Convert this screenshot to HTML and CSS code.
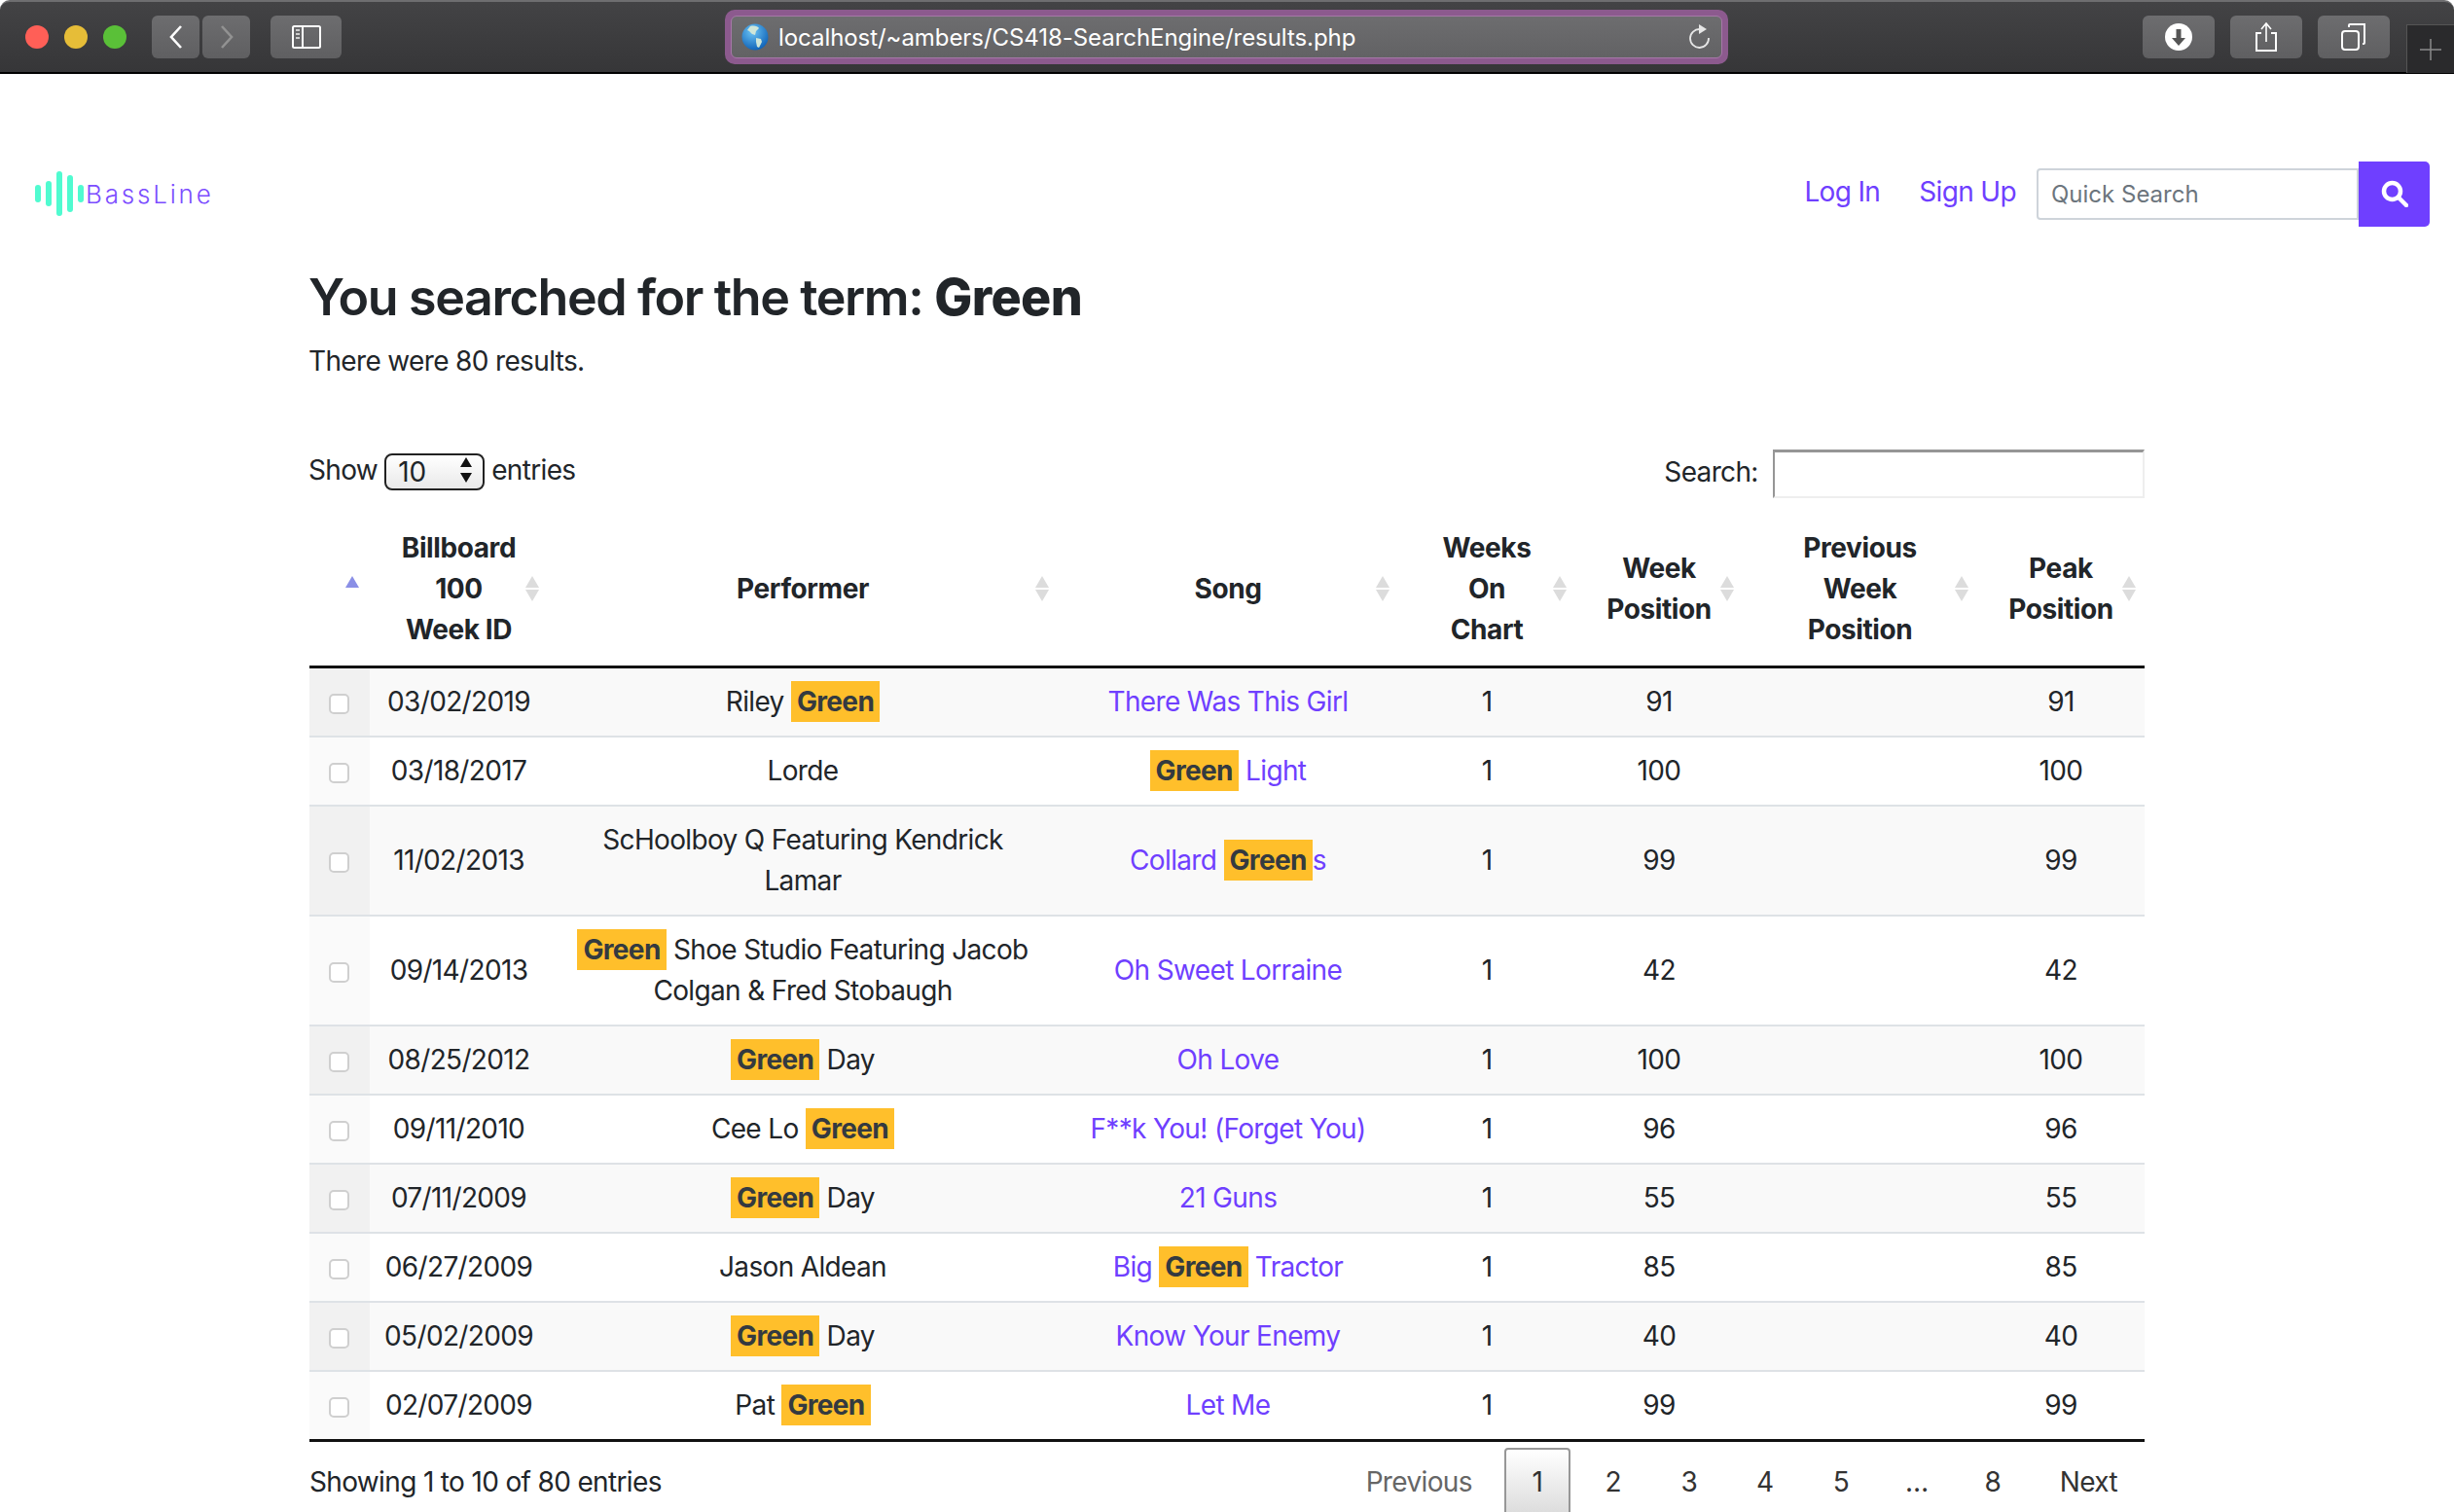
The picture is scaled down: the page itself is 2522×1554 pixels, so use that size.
FILE: index.html
```html
<!DOCTYPE html>
<html lang="en">
<head>
    <meta charset="UTF-8">
    <meta name="viewport" content="width=device-width, initial-scale=1.0">
    <title>BassLine - Results</title>
    <link rel="stylesheet" href="styles.css">
</head>
<body>
    <!-- browser toolbar -->
    <header class="toolbar">
        <div class="lights">
            <span class="light red"></span>
            <span class="light yellow"></span>
            <span class="light green"></span>
        </div>
        <div class="nav-btns">
            <span class="tool-btn small"><svg width="20" height="26" viewBox="0 0 20 26"><path d="M15 2 5 13l10 11" fill="none" stroke="#fff" stroke-width="2.6"/></svg></span>
            <span class="tool-btn small"><svg width="20" height="26" viewBox="0 0 20 26"><path d="M5 2l10 11L5 24" fill="none" stroke="#929292" stroke-width="2.6"/></svg></span>
        </div>
        <span class="tool-btn sidebar"><svg width="30" height="24" viewBox="0 0 30 24"><rect x="1" y="1" width="28" height="22" rx="1.5" fill="none" stroke="#fff" stroke-width="2"/><path d="M11 1v22" stroke="#fff" stroke-width="2"/><path d="M4 5h4M4 9h4M4 13h4" stroke="#ccc" stroke-width="2"/></svg></span>
        <div class="address-ring">
            <div class="address">
                <svg class="globe" width="28" height="28" viewBox="0 0 28 28">
                    <defs><radialGradient id="sea" cx="40%" cy="30%" r="75%"><stop offset="0" stop-color="#6cc4f5"/><stop offset="1" stop-color="#0c5fb5"/></radialGradient></defs>
                    <circle cx="14" cy="14" r="13.5" fill="url(#sea)"/>
                    <path d="M9 3c4-1 8 0 9 2l-3 3-1 4-3-1-3-3-2-1zM15 15l5 1 1 3-3 6-2-1-1-5z" fill="#cfe6d8"/>
                </svg>
                <span class="url">localhost/~ambers/CS418-SearchEngine/results.php</span>
                <svg class="reload" width="24" height="28" viewBox="0 0 24 28"><path d="M13 6a9.500 9.500 0 1 0 9 9" fill="none" stroke="#e6e6e6" stroke-width="1.800"/><path d="M12 1l8 5-8 5z" fill="#e6e6e6"/></svg>
            </div>
        </div>
        <div class="right-tools">
            <span class="tool-btn wide"><svg width="28" height="28" viewBox="0 0 28 28"><circle cx="14" cy="14" r="14" fill="#fff"/><path d="M11.500 6h5v9h4.500L14 23l-7-8h4.500z" fill="#555"/></svg></span>
            <span class="tool-btn wide"><svg width="24" height="30" viewBox="0 0 24 30"><path d="M7 11H2v18h20V11h-5" fill="none" stroke="#fff" stroke-width="2"/><path d="M12 20V2M7 7l5-6 5 6" fill="none" stroke="#fff" stroke-width="1.600"/></svg></span>
            <span class="tool-btn wide"><svg width="26" height="28" viewBox="0 0 26 28"><rect x="1" y="8" width="17" height="19" rx="3" fill="none" stroke="#fff" stroke-width="2"/><path d="M8 4V2a1 1 0 0 1 1-1h15v19a1 1 0 0 1-1 1h-1" fill="none" stroke="#fff" stroke-width="2"/></svg></span>
        </div>
        <span class="new-tab"><svg width="24" height="24" viewBox="0 0 24 24"><path d="M12 1v22M1 12h22" stroke="#8a8a8a" stroke-width="1.500"/></svg></span>
    </header>

    <nav class="navbar">
        <a class="brand" href="#">
            <svg width="50" height="46" viewBox="0 0 50 46">
                <g fill="#50fbd0">
                    <rect x="0" y="14" width="6" height="18" rx="3"/>
                    <rect x="11" y="10" width="6" height="26" rx="3"/>
                    <rect x="22" y="0" width="6" height="46" rx="3"/>
                    <rect x="33" y="4" width="6" height="38" rx="3"/>
                    <rect x="44" y="14" width="6" height="18" rx="3"/>
                </g>
            </svg>
            <span class="brand-name">BassLine</span>
        </a>
        <div class="nav-links">
            <a href="#">Log In</a>
            <a href="#">Sign Up</a>
        </div>
        <form class="quick-search">
            <input type="text" placeholder="Quick Search">
            <button type="button"><svg width="28" height="28" viewBox="0 0 28 28"><circle cx="11.500" cy="11.500" r="8.500" fill="none" stroke="#fff" stroke-width="4.500"/><path d="M18 18l8 8" stroke="#fff" stroke-width="4.500" stroke-linecap="round"/></svg></button>
        </form>
    </nav>

    <main class="container">
        <h2>You searched for the term: <b>Green</b></h2>
        <p class="count">There were 80 results.</p>

        <div class="table-top">
            <label class="length">Show
                <span class="select-wrap">
                    <select><option>10</option><option>25</option><option>50</option></select>
                    <svg width="14" height="26" viewBox="0 0 14 26"><path d="M7 0l6 10H1zM7 26l6-10H1z" fill="#111"/></svg>
                </span>
                entries</label>
            <label class="filter">Search: <input type="search"></label>
        </div>

        <table id="results">
            <colgroup>
                <col class="c-check"><col class="c-date"><col class="c-perf"><col class="c-song">
                <col class="c-weeks"><col class="c-pos"><col class="c-prev"><col class="c-peak">
            </colgroup>
            <thead>
                <tr>
                    <th class="sorted"></th>
                    <th class="sort">Billboard<br>100<br>Week ID</th>
                    <th class="sort">Performer</th>
                    <th class="sort">Song</th>
                    <th class="sort">Weeks<br>On<br>Chart</th>
                    <th class="sort">Week<br>Position</th>
                    <th class="sort">Previous<br>Week<br>Position</th>
                    <th class="sort">Peak<br>Position</th>
                </tr>
            </thead>
            <tbody>
                <tr class="odd"><td class="check"><input type="checkbox"></td><td>03/02/2019</td><td class="perf">Riley <mark>Green</mark></td><td><a href="#">There Was This Girl</a></td><td>1</td><td>91</td><td></td><td>91</td></tr>
                <tr><td class="check"><input type="checkbox"></td><td>03/18/2017</td><td class="perf">Lorde</td><td><a href="#"><mark>Green</mark> Light</a></td><td>1</td><td>100</td><td></td><td>100</td></tr>
                <tr class="odd"><td class="check"><input type="checkbox"></td><td>11/02/2013</td><td class="perf">ScHoolboy Q Featuring Kendrick Lamar</td><td><a href="#">Collard <mark>Green</mark>s</a></td><td>1</td><td>99</td><td></td><td>99</td></tr>
                <tr><td class="check"><input type="checkbox"></td><td>09/14/2013</td><td class="perf"><mark>Green</mark> Shoe Studio Featuring Jacob Colgan &amp; Fred Stobaugh</td><td><a href="#">Oh Sweet Lorraine</a></td><td>1</td><td>42</td><td></td><td>42</td></tr>
                <tr class="odd"><td class="check"><input type="checkbox"></td><td>08/25/2012</td><td class="perf"><mark>Green</mark> Day</td><td><a href="#">Oh Love</a></td><td>1</td><td>100</td><td></td><td>100</td></tr>
                <tr><td class="check"><input type="checkbox"></td><td>09/11/2010</td><td class="perf">Cee Lo <mark>Green</mark></td><td><a href="#">F**k You! (Forget You)</a></td><td>1</td><td>96</td><td></td><td>96</td></tr>
                <tr class="odd"><td class="check"><input type="checkbox"></td><td>07/11/2009</td><td class="perf"><mark>Green</mark> Day</td><td><a href="#">21 Guns</a></td><td>1</td><td>55</td><td></td><td>55</td></tr>
                <tr><td class="check"><input type="checkbox"></td><td>06/27/2009</td><td class="perf">Jason Aldean</td><td><a href="#">Big <mark>Green</mark> Tractor</a></td><td>1</td><td>85</td><td></td><td>85</td></tr>
                <tr class="odd"><td class="check"><input type="checkbox"></td><td>05/02/2009</td><td class="perf"><mark>Green</mark> Day</td><td><a href="#">Know Your Enemy</a></td><td>1</td><td>40</td><td></td><td>40</td></tr>
                <tr><td class="check"><input type="checkbox"></td><td>02/07/2009</td><td class="perf">Pat <mark>Green</mark></td><td><a href="#">Let Me</a></td><td>1</td><td>99</td><td></td><td>99</td></tr>
            </tbody>
        </table>

        <div class="table-bottom">
            <div class="info">Showing 1 to 10 of 80 entries</div>
            <div class="paging">
                <a class="page-btn disabled" href="#">Previous</a>
                <a class="page-btn current" href="#">1</a>
                <a class="page-btn" href="#">2</a>
                <a class="page-btn" href="#">3</a>
                <a class="page-btn" href="#">4</a>
                <a class="page-btn" href="#">5</a>
                <span class="page-btn dots">…</span>
                <a class="page-btn" href="#">8</a>
                <a class="page-btn next" href="#">Next</a>
            </div>
        </div>
    </main>
</body>
</html>
```

FILE: styles.css
```css
* {
    box-sizing: border-box;
}
html, body {
    height: 1554px;
    overflow: hidden;
}
body {
    margin: 0;
    background: #fff;
    color: #212529;
    font-family: Inter, "Liberation Sans", sans-serif;
    font-size: 28px;
    letter-spacing: -0.65px;
    line-height: 42px;
}
a {
    color: #6f3fff;
    text-decoration: none;
}

/* browser toolbar */
.toolbar {
    height: 76px;
    display: flex;
    align-items: flex-start;
    padding: 14px 0 0 26px;
    background: linear-gradient(#434345, #363638);
    border-top: 2px solid #6e6e70;
    border-bottom: 2px solid #000;
    border-radius: 10px 10px 0 0;
    position: relative;
    letter-spacing: 0;
}
.lights {
    display: flex;
    gap: 16px;
    margin-top: 10px;
    margin-right: 26px;
}
.light {
    width: 24px;
    height: 24px;
    border-radius: 50%;
}
.light.red { background: #ff5f57; }
.light.yellow { background: #e6bd38; }
.light.green { background: #5ac038; }
.tool-btn {
    height: 44px;
    display: flex;
    align-items: center;
    justify-content: center;
    background: linear-gradient(#6d6d6f, #5f5f61);
    border-radius: 6px;
}
.tool-btn.small { width: 49px; }
.tool-btn.sidebar { width: 73px; margin-left: 21px; }
.tool-btn.wide { width: 74px; }
.nav-btns {
    display: flex;
    gap: 3px;
}
.address-ring {
    width: 1031px;
    height: 56px;
    padding: 6px;
    background: #8c5a8e;
    border-radius: 10px;
    position: absolute;
    left: 745px;
    top: 8px;
}
.address {
    height: 44px;
    display: flex;
    align-items: center;
    gap: 10px;
    padding: 0 11px 0 10px;
    background: linear-gradient(#6d6d6f, #626264);
    border: 1px solid #a678a8;
    border-radius: 6px;
    color: #fff;
    font-size: 24px;
}
.url {
    flex: 1;
    padding-top: 2px;
    letter-spacing: -0.06px;
}
.right-tools {
    display: flex;
    gap: 16px;
    margin-left: auto;
    margin-right: 66px;
}
.new-tab {
    width: 49px;
    height: 50px;
    display: flex;
    align-items: center;
    justify-content: center;
    background: #2a2a2c;
    border: 1px solid #555;
    border-width: 1px 0 0 1px;
    position: absolute;
    right: 0;
    top: 23px;
}

/* site nav */
.navbar {
    height: 178px;
    display: flex;
    align-items: center;
    padding: 68px 25px 0 36px;
}
.brand {
    display: flex;
    align-items: center;
    margin-right: auto;
}
.brand-name {
    margin-left: 2px;
    padding-top: 2px;
    font-size: 26px;
    font-weight: 300;
    letter-spacing: 2.8px;
    color: #7c4dff;
}
.nav-links {
    display: flex;
    gap: 40px;
    margin-right: 21px;
    margin-top: -4px;
}
.quick-search {
    display: flex;
    align-items: center;
}
.quick-search input {
    width: 331px;
    height: 53px;
    padding: 0 13px;
    border: 2px solid #ced4da;
    border-radius: 4px 0 0 4px;
    color: #495057;
    font: 24px Inter, sans-serif;
}
.quick-search input::placeholder {
    color: #6c757d;
}
.quick-search button {
    width: 73px;
    height: 67px;
    padding: 0;
    border: none;
    border-radius: 0 5px 5px 0;
    background: #6f3fff;
    display: flex;
    align-items: center;
    justify-content: center;
}

/* results */
.container {
    width: 1886px;
    margin-left: 318px;
}
h2 {
    margin: 22px 0 0 -1px;
    font-size: 52px;
    line-height: 60px;
    font-weight: 600;
    letter-spacing: -1.4px;
}
h2 b {
    font-weight: 800;
    letter-spacing: -0.6px;
}
.count {
    margin: 14px 0 0 -1px;
}
.table-top {
    display: flex;
    justify-content: space-between;
    align-items: flex-start;
    margin: 70px 0 0 -1px;
}
.length {
    display: flex;
    align-items: center;
    gap: 7px;
    height: 42px;
}
.select-wrap {
    position: relative;
    display: block;
    height: 38px;
}
.select-wrap select {
    width: 103px;
    height: 38px;
    padding: 0 12px;
    appearance: none;
    border: 2px solid #222;
    border-radius: 8px;
    background: linear-gradient(#fff, #e9e9e9);
    color: #212529;
    font: 28px Inter, sans-serif;
}
.select-wrap svg {
    position: absolute;
    right: 12px;
    top: 6px;
}
.filter input {
    width: 382px;
    height: 50px;
    margin-left: 8px;
    padding: 0 8px;
    border: 2px solid #eee;
    border-top-width: 3px;
    border-top-color: #969696;
    border-left-color: #969696;
    vertical-align: middle;
}
table {
    width: 100%;
    table-layout: fixed;
    border-collapse: collapse;
    margin-top: 20px;
}
.c-check { width: 62px; }
.c-date { width: 183px; }
.c-perf { width: 524px; }
.c-song { width: 350px; }
.c-weeks { width: 182px; }
.c-pos { width: 172px; }
.c-prev { width: 241px; }
.c-peak { width: 172px; }
th, td {
    text-align: center;
    vertical-align: middle;
}
th {
    padding: 10px 0 16px;
    font-weight: 700;
    letter-spacing: -0.4px;
    position: relative;
    border-bottom: 3px solid #111;
}
th.sort::before, th.sort::after, th.sorted::before {
    content: "";
    position: absolute;
    right: 9px;
    border-left: 7px solid transparent;
    border-right: 7px solid transparent;
}
th.sort::before {
    top: calc(50% - 16px);
    border-bottom: 12px solid #dcdcdc;
}
th.sort::after {
    top: calc(50% - 2px);
    border-top: 12px solid #dcdcdc;
}
th.sorted::before {
    top: calc(50% - 16px);
    right: 11px;
    border-bottom: 12px solid #8a8fe6;
}
td {
    padding: 12.5px 12px 14.5px;
    border-bottom: 2px solid #dee2e6;
}
td.perf {
    padding-left: 20px;
    padding-right: 20px;
}
tbody tr:last-child td {
    border-bottom: 3px solid #111;
}
tr.odd td {
    background: #f9f9f9;
}
td.check {
    padding: 0;
    background: #fafafa;
}
tr.odd td.check {
    background: #f1f1f1;
}
td.check input {
    appearance: none;
    display: block;
    width: 21px;
    height: 21px;
    margin: 3px 0 0 20px;
    border: 2px solid #cfcfcf;
    border-radius: 5px;
    background: #fff;
}
mark {
    display: inline-block;
    padding: 0 6px;
    background: #ffbf2b;
    color: #343a40;
    font-weight: 700;
}
.table-bottom {
    display: flex;
    justify-content: space-between;
    align-items: flex-start;
}
.info {
    padding-top: 20px;
}
.paging {
    display: flex;
    padding-top: 6px;
    margin-right: 9px;
}
.page-btn {
    min-width: 68px;
    height: 70px;
    padding: 0 12px;
    display: flex;
    align-items: center;
    justify-content: center;
    margin: 0 5px;
    color: #333;
    border: 2px solid transparent;
}
.page-btn.disabled {
    color: #666;
    margin-right: 14px;
}
.page-btn.next {
    margin-left: 16px;
}
.page-btn.current {
    border-color: #979797;
    border-radius: 4px;
    background: linear-gradient(#fff, #dcdcdc);
}
```
